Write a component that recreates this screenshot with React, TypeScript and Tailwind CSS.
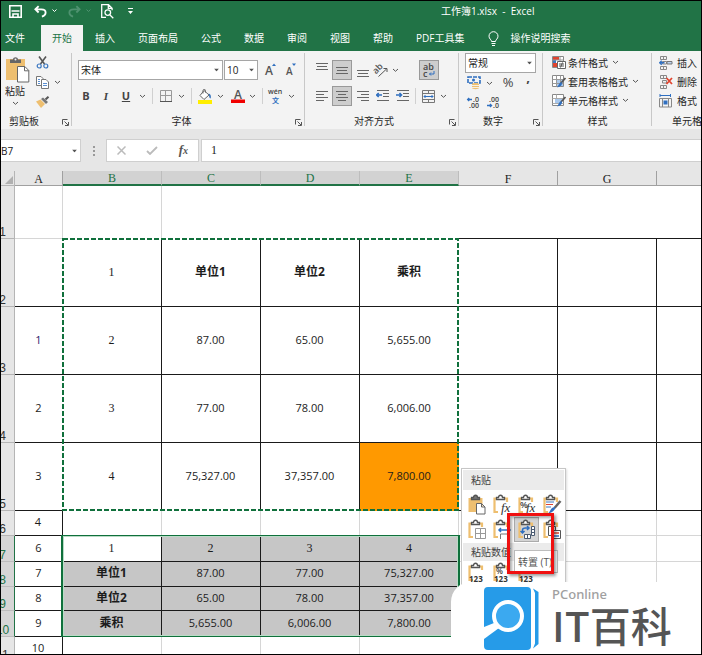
import React from "react";

const K = "border-[#1a1a1a]";
const G = "border-[#d6d6d6]";
const SERIF = "font-['Liberation_Serif','Noto_Sans_CJK_SC',serif]";

/* ---------- small shared pieces ---------- */

function Chevron() {
  return (
    <svg width="7" height="5" viewBox="0 0 7 5" fill="none" stroke="#555" className="shrink-0">
      <path d="M1 1l2.5 2.3L6 1" />
    </svg>
  );
}

function Caret() {
  return (
    <svg width="5" height="3" viewBox="0 0 5 3" fill="#555" className="pointer-events-none absolute right-1 top-1/2 -translate-y-1/2">
      <path d="M0 0h5L2.500 3z" />
    </svg>
  );
}

function Drop({ label }: { label: string }) {
  return (
    <button aria-label={label} className="flex h-5 w-3 items-center justify-center">
      <Chevron />
    </button>
  );
}

function Tool({ label, className = "", children }: { label: string; className?: string; children: React.ReactNode }) {
  return (
    <button aria-label={label} className={`flex h-5 shrink-0 items-center justify-center ${className}`}>
      {children}
    </button>
  );
}

function Rule() {
  return <span className="h-4 w-px shrink-0 bg-[#d0d0d0]" />;
}

function Box({ label, options, className }: { label: string; options: string[]; className: string }) {
  return (
    <div className={`relative shrink-0 ${className}`}>
      <select aria-label={label} className="block h-full w-full appearance-none border border-[#a6a6a6] bg-white pl-[2px] text-[10px] leading-4 text-[#222] outline-none">
        {options.map((o) => (
          <option key={o}>{o}</option>
        ))}
      </select>
      <Caret />
    </div>
  );
}

function Group({
  name,
  launcher,
  labelPad = "",
  className,
  children,
}: {
  name: string;
  launcher?: boolean;
  labelPad?: string;
  className: string;
  children: React.ReactNode;
}) {
  return (
    <section aria-label={name} className={`relative flex shrink-0 flex-col ${className}`}>
      {children}
      <div className="mt-auto flex h-4 items-center">
        <span className={`flex-1 whitespace-nowrap text-center ${labelPad}`}>{name}</span>
        {launcher && (
          <button aria-label={`${name}设置`} className="mr-[3px] mt-[3px]">
            <svg width="7" height="7" viewBox="0 0 7 7" fill="none" stroke="#555">
              <path d="M.5 5.5v-5h5M2.500 2.500l3.500 3.500M6.500 3v3.500H3" />
            </svg>
          </button>
        )}
      </div>
      <span className="absolute bottom-[3px] right-0 top-[2px] w-px bg-[#c8c8c8]" />
    </section>
  );
}

/* ---------- line icons ---------- */

function Lines({ d, h = 8 }: { d: string; h?: number }) {
  return (
    <svg width="12" height={h} viewBox={`0 0 12 ${h}`} fill="none" stroke="#666">
      <path d={d} />
    </svg>
  );
}

function SaveIcon() {
  return (
    <svg width="13" height="13" viewBox="0 0 13 13" fill="none" stroke="#fff" strokeWidth="1.6">
      <path d="M.8.8h11.4v11.4H.8zM2.500 6h8M4 12V9h5v3" />
    </svg>
  );
}

function UndoIcon({ flip }: { flip?: boolean }) {
  return (
    <svg width="13" height="13" viewBox="0 0 14 13" fill="none" stroke={flip ? "#4f9270" : "#fff"} strokeWidth="2" className={flip ? "-scale-x-100" : ""}>
      <path d="M5 .8L1.500 4.200 5 7.600M1.500 4.200h6.300c3 0 4.700 1.500 4.700 3.500 0 2.300-1.700 3.700-4 4.300" />
    </svg>
  );
}

function PreviewIcon() {
  return (
    <svg width="13" height="15" viewBox="0 0 13 15" fill="none" stroke="#fff" strokeWidth="1.3">
      <path d="M5 13.400H.7V.7h6.800l3.600 3.500v2M7.300.9v3.500H11M9 11l3.300 3.200" />
      <circle cx="6.800" cy="8.600" r="2.800" />
    </svg>
  );
}

function PasteBig() {
  return (
    <svg width="25" height="27" viewBox="0 0 25 27">
      <path d="M1 3h19v21H1z" fill="#eebf70" />
      <path d="M5 7V3.400h3C8 .6 13 .6 13 3.400h3V7z" fill="#666" />
      <circle cx="10.500" cy="3.400" r="1" fill="#f3f3f3" />
      <path d="M12.500 10.500h7.300l4 4v11.500h-11.300z" fill="#fff" stroke="#666" />
      <path d="M19.500 10.500v4.300h4.300" fill="none" stroke="#666" />
    </svg>
  );
}

function CutIcon() {
  return (
    <svg width="13" height="13" viewBox="0 0 13 13" fill="none">
      <path d="M3 .5l5.500 7.500M10 .5L4.500 8" stroke="#555" strokeWidth="1.600" />
      <circle cx="3.200" cy="10" r="2" stroke="#3c78c0" strokeWidth="1.200" />
      <circle cx="9.800" cy="10" r="2" stroke="#3c78c0" strokeWidth="1.200" />
    </svg>
  );
}

function CopyIcon() {
  return (
    <svg width="13" height="13" viewBox="0 0 13 13" fill="#fff" stroke="#777">
      <path d="M.5.5h4.500l2 2v7H.5z" />
      <path d="M5.500 3.500h4.500l2.500 2.500v6.500h-7z" />
      <path d="M2 3.500h2M2 5.500h2M2 7.500h2M7 7.500h4M7 9.500h4" stroke="#5b8fd0" />
    </svg>
  );
}

function BrushIcon() {
  return (
    <svg width="14" height="12" viewBox="0 0 14 12">
      <path d="M0 5.500l4.500-2 4.500 4.500-4 4z" fill="#eebf70" />
      <path d="M5 3l2-1.500 5 4.500-2 2z" fill="#777" />
      <path d="M9.500 3.500L12.500.7" stroke="#555" strokeWidth="2" />
    </svg>
  );
}

function BordersIcon() {
  return (
    <svg width="12" height="12" viewBox="0 0 12 12" fill="none" stroke="#999">
      <path d="M.5.500h11v11M.5.500v11M5.500 1v10M1 5.500h10" />
      <path d="M0 11.500h12" stroke="#555" />
    </svg>
  );
}

function FillIcon() {
  return (
    <svg width="14" height="15" viewBox="0 0 14 15" fill="none">
      <path d="M6 1.500l5 4.500-5 4.500L2 6.500z" fill="#fff" stroke="#666" />
      <path d="M5 4.500V1.500c0-1.500 2.500-1.500 2.500 0v2" stroke="#666" />
      <path d="M10.500 4.500c2 .5 2.800 2 2.300 5-1.600-.5-1.800-2-1.800-3.500z" fill="#3c78c0" />
      <path d="M0 11h14v4H0z" fill="#ffee00" />
    </svg>
  );
}

function OrientIcon() {
  return (
    <svg width="14" height="14" viewBox="0 0 14 14" className="overflow-visible">
      <text x="0" y="9" fontSize="9" fontWeight="600" fontFamily="Open Sans" fill="#555" transform="rotate(-45 4 8)">ab</text>
      <path d="M4.500 13.500L12.500 6M9.500 5.500h3.500v3.500" fill="none" stroke="#555" />
    </svg>
  );
}

function IndentIcon({ inward }: { inward?: boolean }) {
  return (
    <svg width="14" height="12" viewBox="0 0 14 12" fill="none">
      <path d="M1 .5h12M7 3.500h6M7 6.500h6M1 10.500h12" stroke="#666" />
      <path d={inward ? "M0 5h5.500M3.500 3l2 2-2 2" : "M6 5H.7M2.700 3l-2 2 2 2"} stroke="#2f6fc0" strokeWidth="1.600" />
    </svg>
  );
}

function MergeIcon() {
  return (
    <svg width="13" height="13" viewBox="0 0 13 13" fill="none">
      <path d="M.5.5h12v12H.5zM.5 3.500h12M.5 9.500h12M6.500.5v3M6.500 9.500v3" stroke="#777" />
      <path d="M2 6.500h9M3.500 5L2 6.500 3.500 8M9.500 5L11 6.500 9.500 8" stroke="#2f6fc0" />
    </svg>
  );
}

function CurrencyIcon() {
  return (
    <svg width="14" height="14" viewBox="0 0 14 14" fill="none">
      <path d="M1 1h12v6H1z" stroke="#2f6fc0" strokeWidth="1.600" strokeDasharray="4 1" />
      <circle cx="6.500" cy="4" r="1.500" fill="#2f6fc0" />
      <path d="M5 8c0-1.500 7-1.500 7 0v4c0 1.500-7 1.500-7 0z" fill="#eebf70" />
      <path d="M5 9.500h7M5 11.500h7" stroke="#f7f0e2" />
    </svg>
  );
}

function DecimalIcon({ less }: { less?: boolean }) {
  return (
    <svg width="14" height="13" viewBox="0 0 14 13" fontFamily="Open Sans" fontSize="7" fontWeight="600" fill="#444" className="overflow-visible">
      <text x={less ? 2 : 6} y="6">{less ? ".00" : ".0"}</text>
      <text x={less ? 6 : 2} y="12">{less ? ".0" : ".00"}</text>
      <path d={less ? "M0 9.500h4.500M3 8l1.500 1.500L3 11" : "M5 3.500H.7M2.200 2L.7 3.500 2.200 5"} fill="none" stroke="#2f6fc0" strokeWidth="1.400" />
    </svg>
  );
}

function StyleIcon({ kind }: { kind: "cond" | "table" | "cell" }) {
  return (
    <svg width="14" height="13" viewBox="0 0 14 13" fill="none">
      <path d="M.5.5h11v11H.5z" fill="#fff" stroke="#888" />
      {kind === "cond" ? (
        <>
          <path d="M1 1h6v3H1zM1 7h4v4H1z" fill="#e0442e" />
          <path d="M1 4h3v3H1z" fill="#3c78c0" />
          <path d="M8 1v4M.5 4h11" stroke="#999" />
          <path d="M5.500 5.500h8v7h-8z" fill="#fff" stroke="#666" />
          <path d="M7 8h5M7 10h5M10.500 6.500l-2 5" stroke="#555" />
        </>
      ) : (
        <>
          {kind === "table" ? (
            <>
              <path d="M4 4h7v7H4z" fill="#a9c8ec" />
              <path d="M.5 4.500h11M.5 8.500h11M4.500.5v11M8.500.5v11" stroke="#999" />
            </>
          ) : (
            <>
              <path d="M3 4h7v5H3z" fill="#a9c8ec" />
              <path d="M.5 4.500h11M4.500.5v4M.5 9.500h11" stroke="#aaa" />
            </>
          )}
          <path d="M13.500 3L9 8" stroke="#555" strokeWidth="1.800" />
          <path d="M9.500 7.200c1.200 1 .5 4.300-4.500 5.300 1.800-1.600 1.500-5 4.500-5.300z" fill="#2f6fc0" />
        </>
      )}
    </svg>
  );
}

function CellsIcon({ kind }: { kind: "ins" | "del" | "fmt" }) {
  return (
    <svg width="14" height="14" viewBox="0 0 14 14" fill="none">
      {kind === "fmt" ? (
        <>
          <path d="M1 0v3M11.500 0v3M1 1.500h10.500" stroke="#2f6fc0" />
          <path d="M.5 4.500h12v8.500H.5zM3.500 4.500V13M9.500 4.500V13" stroke="#888" />
          <path d="M4.500 6.500h4v4h-4z" fill="#2f6fc0" />
        </>
      ) : (
        <>
          <path d="M1.500.5h6v3h-6zM4.500.5v3M1.500 10.500h6v3h-6zM4.500 10.500v3" stroke="#888" />
          <path d="M3.500 5.500h4v2.500h-4z" stroke="#888" />
          {kind === "ins" ? (
            <>
              <path d="M5.500 6.700H.7M2.700 4.700l-2 2 2 2" stroke="#2f6fc0" strokeWidth="1.400" />
              <path d="M8 5.500h5v2.500H8z" fill="#bcd4f0" stroke="#777" />
            </>
          ) : (
            <path d="M7.500 3l5.500 6M13 3L7.500 9" stroke="#e0442e" strokeWidth="1.800" />
          )}
        </>
      )}
    </svg>
  );
}

/* ---------- paste menu icons ---------- */

type PasteKind = "all" | "fx" | "pfx" | "src" | "nob" | "width" | "trans" | "link" | "v" | "pv" | "sv";

function PasteOption({ kind }: { kind: PasteKind }) {
  const values = kind === "v" || kind === "pv" || kind === "sv";
  return (
    <svg width="20" height="22" viewBox="0 0 20 22" fill="none" className="overflow-visible">
      {kind === "all" ? (
        <path d="M1.500 4h14v14h-14z" fill="#eebf70" />
      ) : (
        <path d="M4.500 4.500H2.500V18h3.500M12.500 4.500h2.500V8" stroke="#eebf70" strokeWidth="2.200" />
      )}
      <path d="M4.500 5.500V3.500h2c0-3 4-3 4 0h2v2z" fill={kind === "all" ? "#777" : "#fff"} stroke="#555" strokeWidth="1.300" />
      {kind === "all" && <path d="M9.500 9.500h5l3.500 3.500v7H9.500zM14.500 9.500V13H18" fill="#fff" stroke="#666" />}
      {(kind === "fx" || kind === "pfx") && (
        <text x="9" y="18" fontSize="13" fontStyle="italic" fontFamily="Liberation Serif" fill="#333">fx</text>
      )}
      {kind === "pfx" && <text x="3" y="14" fontSize="9" fontWeight="600" fontFamily="Open Sans" fill="#444">%</text>}
      {kind === "src" && (
        <>
          <path d="M4 8h8M4 13h5" stroke="#3c78c0" />
          <path d="M4 10.500h7" stroke="#e0442e" />
          <path d="M18.500 7l-6 7" stroke="#666" strokeWidth="2.500" />
          <path d="M12.500 13c1.500 1.500 0 5-6.500 6.500 2.500-2 2.500-6 6.500-6.500z" fill="#2f6fc0" />
        </>
      )}
      {kind === "nob" && <path d="M8.500 9.500h10v10h-10zM13.500 9.500v10M8.500 14.500h10" fill="#fff" stroke="#999" />}
      {kind === "width" && (
        <>
          <path d="M8.500 20v-5h9v5" fill="#fff" stroke="#777" />
          <path d="M7 11h11M9 9l-2 2 2 2M16 9l2 2-2 2" stroke="#2f6fc0" strokeWidth="1.500" />
        </>
      )}
      {kind === "trans" && (
        <>
          <path d="M14.500 7.500h3v9h-3zM14.500 10.500h3M14.500 13.500h3M7.500 15.500h6v4h-6zM10.500 15.500v4" fill="#fff" stroke="#4a5a70" />
          <path d="M5.500 14V11c0-1.500 1-2 3-2h3.500M10 7l2 2-2 2M3.500 12l2 2 2-2" stroke="#2f6fc0" strokeWidth="1.500" />
        </>
      )}
      {kind === "link" && (
        <>
          <path d="M6.500 7.500h7v9h-7z" fill="#fff" stroke="#555" />
          <path d="M9.500 11.500h9v8h-9z" fill="#fff" stroke="#555" />
          <path d="M11 14h6" stroke="#e0442e" strokeWidth="1.500" />
          <path d="M11 17h6" stroke="#2f6fc0" strokeWidth="1.500" />
        </>
      )}
      {values && <text x="2" y="20" fontSize="8" fontWeight="bold" fontFamily="Open Sans" fill="#333">123</text>}
      {kind === "pv" && <text x="4" y="12" fontSize="8" fontWeight="600" fontFamily="Open Sans" fill="#444">%</text>}
      {kind === "sv" && <path d="M6 12l4-4 3 4z" fill="#2f6fc0" />}
    </svg>
  );
}

/* ---------- ribbon ---------- */

const TABS = ["开始", "插入", "页面布局", "公式", "数据", "审阅", "视图", "帮助", "PDF工具集"];

function TitleBar() {
  return (
    <header className="bg-[#217346] text-[10px] text-white">
      <div className="flex h-6 items-center">
        <div className="flex w-[440px] shrink-0 items-center pb-1 pl-2">
          <button aria-label="保存"><SaveIcon /></button>
          <button aria-label="撤消" className="ml-3"><UndoIcon /></button>
          <svg width="5" height="4" viewBox="0 0 5 4" fill="none" stroke="#fff" className="ml-[5px]"><path d="M.5.5l2 2 2-2" /></svg>
          <button aria-label="恢复" className="ml-[11px]"><UndoIcon flip /></button>
          <svg width="5" height="4" viewBox="0 0 5 4" fill="none" stroke="#4f9270" className="ml-[5px]"><path d="M.5.5l2 2 2-2" /></svg>
          <button aria-label="打印预览" className="ml-[10px]"><PreviewIcon /></button>
          <button aria-label="自定义快速访问工具栏" className="ml-[14px]">
            <svg width="5" height="6" viewBox="0 0 5 6" fill="#fff"><path d="M0 0h5v1H0zM0 3h5L2.500 6z" /></svg>
          </button>
        </div>
        <h1 className="whitespace-pre pb-1">工作簿1.xlsx  -  Excel</h1>
      </div>
      <nav className="flex h-[26px] items-stretch gap-px whitespace-nowrap">
        <button className="w-[39px] pr-[11px] text-center">文件</button>
        {TABS.map((t, i) => (
          <button key={t} className={i === 0 ? "bg-[#f3f3f3] px-[11px] text-[#217346]" : "px-[11px]"}>
            {t}
          </button>
        ))}
        <button className="ml-3 flex items-center gap-[11px]">
          <svg width="11" height="15" viewBox="0 0 11 15" fill="none" stroke="#fff">
            <path d="M3.500 10.500C3.500 8.500 1 8 1 5.200a4.500 4.500 0 019 0c0 2.800-2.500 3.300-2.500 5.300zM3.500 12.500h4M4 14.500h3" />
          </svg>
          操作说明搜索
        </button>
      </nav>
    </header>
  );
}

function Ribbon() {
  return (
    <div className="flex h-[78px] shrink-0 overflow-hidden bg-[#f3f3f3] text-[10px] leading-4 text-[#262626]">
      <Group name="剪贴板" launcher labelPad="pr-[15px]" className="w-[71px]">
        <div className="flex pl-1 pt-[5px]">
          <button className="flex w-[26px] flex-col items-start">
            <PasteBig />
            <span>粘贴</span>
            <span className="flex w-5 justify-center pt-[2px]"><Chevron /></span>
          </button>
          <div className="flex flex-col gap-[7px] pl-[5px]">
            <button aria-label="剪切"><CutIcon /></button>
            <div className="flex items-center gap-[5px]">
              <button aria-label="复制"><CopyIcon /></button>
              <Chevron />
            </div>
            <button aria-label="格式刷"><BrushIcon /></button>
          </div>
        </div>
      </Group>

      <Group name="字体" launcher labelPad="pr-1" className="w-[233px] pt-[9px]">
        <div className="flex h-5 items-center pl-[6px]">
          <Box label="字体名称" options={["宋体"]} className="h-5 w-[145px]" />
          <Box label="字号" options={["10"]} className="ml-px h-5 w-[34px]" />
          <Tool label="增大字号" className="ml-[7px] w-3">
            <svg width="12" height="14" viewBox="0 0 12 14" fill="#555" className="overflow-visible"><text x="0" y="12" fontSize="12" fontWeight="600" fontFamily="Open Sans">A</text><path d="M7 3h4L9 .5z" fill="#2f6fc0" /></svg>
          </Tool>
          <Tool label="减小字号" className="ml-[9px] w-3">
            <svg width="12" height="14" viewBox="0 0 12 14" fill="#555" className="overflow-visible"><text x="0" y="12" fontSize="10" fontWeight="600" fontFamily="Open Sans">A</text><path d="M6 .5h4L8 3z" fill="#2f6fc0" /></svg>
          </Tool>
        </div>
        <div className="mt-[6px] flex h-5 items-center pl-1 text-[11px] text-[#444]">
          <Tool label="加粗" className="w-5 pb-px font-bold">B</Tool>
          <Tool label="倾斜" className={`w-5 font-bold italic ${SERIF}`}>I</Tool>
          <Tool label="下划线" className="w-5 pb-px font-bold underline">U</Tool>
          <Drop label="下划线样式" />
          <span className="w-1" />
          <Rule />
          <Tool label="边框" className="ml-1 w-[18px]"><BordersIcon /></Tool>
          <Drop label="边框样式" />
          <span className="w-1" />
          <Rule />
          <Tool label="填充颜色" className="ml-1 w-[18px]"><FillIcon /></Tool>
          <Drop label="选择填充颜色" />
          <Tool label="字体颜色" className="ml-1 w-4">
            <svg width="14" height="14" viewBox="0 0 14 14" className="overflow-visible"><text x="3" y="10" fontSize="12" fontWeight="600" fontFamily="Open Sans" fill="#555">A</text><path d="M0 10.500h14V14H0z" fill="#f00000" /></svg>
          </Tool>
          <Drop label="选择字体颜色" />
          <span className="w-1" />
          <Rule />
          <Tool label="拼音" className="ml-1 w-[18px]">
            <svg width="16" height="16" viewBox="0 0 16 16" className="overflow-visible"><text x="0" y="6" fontSize="7" fontWeight="600" fontFamily="Open Sans" fill="#444">wén</text><text x="4" y="15" fontSize="7" fontWeight="bold" fontFamily="Noto Sans CJK SC" fill="#2f6fc0">文</text></svg>
          </Tool>
          <Drop label="拼音选项" />
        </div>
      </Group>

      <Group name="对齐方式" launcher labelPad="pr-[6px]" className="w-[154px] pt-[9px]">
        <div className="flex h-5 items-center pl-[6px]">
          <Tool label="顶端对齐" className="w-[21px]"><Lines d="M0 .5h12M1 3.500h10M0 6.500h12" h={14} /></Tool>
          <Tool label="垂直居中" className="w-5 border border-[#999] bg-[#cdcdcd]"><Lines d="M0 .5h12M1 3.500h10M0 6.500h12" h={7} /></Tool>
          <Tool label="底端对齐" className="w-[21px]"><Lines d="M0 7.500h12M1 10.500h10M0 13.500h12" h={14} /></Tool>
          <Tool label="方向" className="w-4"><OrientIcon /></Tool>
          <Drop label="方向选项" />
          <Tool label="自动换行" className="ml-[18px] w-5 border border-[#999] bg-[#cdcdcd]">
            <svg width="14" height="16" viewBox="0 0 14 16" fontSize="9" fontWeight="600" fontFamily="Open Sans" fill="#444" className="overflow-visible"><text x="1" y="8">ab</text><text x="1" y="15">c</text><path d="M12 9v3H7.500M9 10.500L7.500 12 9 13.500" fill="none" stroke="#2f6fc0" /></svg>
          </Tool>
        </div>
        <div className="mt-[6px] flex h-5 items-center pl-[6px]">
          <Tool label="左对齐" className="w-[21px]"><Lines d="M0 .5h12M0 3.500h8M0 6.500h12M0 9.500h8" h={10} /></Tool>
          <Tool label="居中" className="w-5 border border-[#999] bg-[#cdcdcd]"><Lines d="M0 .5h12M2 3.500h8M0 6.500h12M2 9.500h8" h={10} /></Tool>
          <Tool label="右对齐" className="w-[21px]"><Lines d="M0 .5h12M4 3.500h8M0 6.500h12M4 9.500h8" h={10} /></Tool>
          <Tool label="减少缩进量" className="w-5"><IndentIcon /></Tool>
          <Tool label="增加缩进量" className="w-5"><IndentIcon inward /></Tool>
          <span className="w-[2px]" />
          <Rule />
          <Tool label="合并后居中" className="ml-1 w-[17px]"><MergeIcon /></Tool>
          <Drop label="合并选项" />
        </div>
      </Group>

      <Group name="数字" launcher labelPad="pr-[6px]" className="w-[84px] pt-[2px]">
        <div className="flex h-5 items-center pl-[6px]">
          <Box label="数字格式" options={["常规"]} className="h-5 w-[71px]" />
        </div>
        <div className="flex h-5 items-center pl-[6px] text-[13px] text-[#444]">
          <Tool label="会计数字格式" className="w-[18px]"><CurrencyIcon /></Tool>
          <Drop label="货币" />
          <Tool label="百分比" className="ml-1 w-[18px] pb-[2px]">%</Tool>
          <Tool label="千位分隔" className="ml-1 w-[14px] pt-1 font-bold">’</Tool>
        </div>
        <div className="flex h-5 items-center gap-[6px] pb-[2px] pl-2">
          <Tool label="增加小数位数"><DecimalIcon /></Tool>
          <Tool label="减少小数位数"><DecimalIcon less /></Tool>
        </div>
      </Group>

      <Group name="样式" className="w-[109px] pt-[2px]">
        {([["cond", "条件格式"], ["table", "套用表格格式"], ["cell", "单元格样式"]] as const).map(([k, t]) => (
          <button key={k} className="flex h-[19px] items-center gap-[2px] whitespace-nowrap pl-[9px]">
            <StyleIcon kind={k} />
            <span>{t}</span>
            <span className="pl-[2px]"><Chevron /></span>
          </button>
        ))}
      </Group>

      <Group name="单元格" className="w-[70px] pt-[2px]">
        {([["ins", "插入"], ["del", "删除"], ["fmt", "格式"]] as const).map(([k, t]) => (
          <button key={k} className="flex h-[19px] items-center gap-1 whitespace-nowrap pl-[7px]">
            <CellsIcon kind={k} />
            <span>{t}</span>
          </button>
        ))}
      </Group>
    </div>
  );
}

function FormulaBar() {
  return (
    <div className="flex shrink-0 bg-[#e6e6e6] pb-[9px] pt-[10px]">
      <div className="relative h-[23px] w-20 shrink-0">
        <input aria-label="名称框" defaultValue="B7" className="block h-full w-full border border-l-0 border-[#cfcfcf] bg-white text-[10px] text-[#222] outline-none" />
        <Caret />
      </div>
      <svg width="2" height="10" viewBox="0 0 2 10" fill="#999" className="ml-3 mt-[7px] shrink-0">
        <path d="M0 0h2v2H0zM0 4h2v2H0zM0 8h2v2H0z" />
      </svg>
      <div className="ml-[11px] flex h-[23px] w-[93px] shrink-0 items-center justify-between border border-[#cfcfcf] bg-white px-[10px]">
        <button aria-label="取消"><svg width="9" height="9" viewBox="0 0 9 9" stroke="#bbb" strokeWidth="1.500"><path d="M.5.5l8 8M8.500.5l-8 8" /></svg></button>
        <button aria-label="输入"><svg width="12" height="9" viewBox="0 0 12 9" fill="none" stroke="#bbb" strokeWidth="1.800"><path d="M1 5l3 3 7-7" /></svg></button>
        <button aria-label="插入函数" className="font-['Liberation_Serif',serif] text-[13px] font-bold italic leading-4 text-[#555]">f<span className="text-[10px]">x</span></button>
      </div>
      <input aria-label="编辑栏" defaultValue="1" className={`ml-[2px] h-[23px] min-w-0 flex-1 border border-r-0 border-[#cfcfcf] bg-white pl-[9px] text-[12px] text-[#222] outline-none ${SERIF}`} />
    </div>
  );
}

/* ---------- sheet ---------- */

type Row = { n: number; h: string; a: string; v: string[] };

const SOURCE: Row[] = [
  { n: 2, h: "h-[68px]", a: "", v: ["1", "单位1", "单位2", "乘积"] },
  { n: 3, h: "h-[68px]", a: "1", v: ["2", "87.00", "65.00", "5,655.00"] },
  { n: 4, h: "h-[68px]", a: "2", v: ["3", "77.00", "78.00", "6,006.00"] },
  { n: 5, h: "h-[68px]", a: "3", v: ["4", "75,327.00", "37,357.00", "7,800.00"] },
];

const RESULT: Row[] = [
  { n: 7, h: "h-[26px]", a: "6", v: ["1", "2", "3", "4"] },
  { n: 8, h: "h-[25px]", a: "7", v: ["单位1", "87.00", "77.00", "75,327.00"] },
  { n: 9, h: "h-[24px]", a: "8", v: ["单位2", "65.00", "78.00", "37,357.00"] },
  { n: 10, h: "h-[26px]", a: "9", v: ["乘积", "5,655.00", "6,006.00", "7,800.00"] },
];

function textStyle(v: string) {
  if (/^\d$/.test(v)) return `text-[12px] ${SERIF}`;
  return /^[^\d]/.test(v) ? "text-[12px] font-bold" : "";
}

function RowHead({ n, on }: { n: number; on?: boolean }) {
  return (
    <th scope="row" className={`border-b border-r p-0 align-bottom font-normal ${on ? "border-b-[#bdbdbd] border-r-[#217346] bg-[#d6d6d6] text-[#217346]" : "border-[#b5b5b5] bg-[#e6e6e6] text-[#333]"}`}>
      <div className="flex justify-center overflow-hidden pr-[10px] leading-3">
        <span className="font-['Liberation_Sans',sans-serif] text-[12px]">{n}</span>
      </div>
    </th>
  );
}

const CELL = "p-0 pb-[2px] pr-px text-center align-middle border-solid";

function Sheet() {
  return (
    <div className="relative min-h-0 flex-1 overflow-hidden bg-white">
      <table className="w-full table-fixed border-separate border-spacing-0 text-[11px] leading-4 text-[#1c1c1c]">
        <colgroup>
          <col className="w-[14px]" />
          <col className="w-12" />
          <col className="w-[99px]" />
          <col className="w-[99px]" />
          <col className="w-[99px]" />
          <col className="w-[99px]" />
          <col className="w-[99px]" />
          <col className="w-[99px]" />
          <col />
        </colgroup>
        <thead>
          <tr className={`h-[15px] bg-[#e6e6e6] text-[12px] leading-3 ${SERIF}`}>
            <th className="border-b border-r border-[#b5b5b5] p-0 align-bottom">
              <svg width="8" height="8" viewBox="0 0 8 8" fill="#b0b0b0" className="mb-px ml-auto mr-px"><path d="M8 0v8H0z" /></svg>
            </th>
            {["A", "B", "C", "D", "E", "F", "G", ""].map((c, i) => (
              <th
                key={i}
                scope="col"
                className={
                  i >= 1 && i <= 4
                    ? "border-b-2 border-r border-b-[#217346] border-r-[#bdbdbd] bg-[#d2d2d2] p-0 align-bottom font-normal text-[#217346]"
                    : `border-b border-[#a0a0a0] p-0 align-bottom font-normal ${i === 7 ? "" : "border-r"}`
                }
              >
                {c}
              </th>
            ))}
          </tr>
        </thead>
        <tbody>
          <tr className="h-[53px]">
            <RowHead n={1} />
            <td className={`${CELL} border-b border-r ${G}`} />
            <td className={`${CELL} border-r ${G}`} />
            <td colSpan={3} className={CELL} />
            <td className={`${CELL} border-b ${K}`} />
            <td className={`${CELL} border-b ${K}`} />
            <td className={`${CELL} border-b ${K}`} />
          </tr>
          {SOURCE.map((row, ri) => {
            const last = ri === 3;
            return (
              <tr key={row.n} className={row.h}>
                <RowHead n={row.n} />
                <td className={`${CELL} border-b ${K} ${ri === 1 ? "text-[#2a1a6a]" : ""}`}>{row.a}</td>
                {row.v.map((v, i) => (
                  <td
                    key={i}
                    className={`${CELL} ${last ? "" : "border-b"} ${i < 3 ? "border-r" : ""} ${K} ${textStyle(v)} ${last && i === 3 ? "bg-[#ff9900]" : ""}`}
                  >
                    {v}
                  </td>
                ))}
                <td className={`${CELL} border-b border-r ${K}`} />
                <td className={`${CELL} border-b border-r ${K}`} />
                <td className={`${CELL} border-b ${K}`} />
              </tr>
            );
          })}
          <tr className="h-[25px]">
            <RowHead n={6} />
            <td className={`${CELL} border-b border-r ${K}`}>4</td>
            {[0, 1, 2, 3].map((i) => (
              <td key={i} className={`${CELL} border-r ${G}`} />
            ))}
            <td className={`${CELL} border-b border-r ${G}`} />
            <td className={`${CELL} border-b border-r ${G}`} />
            <td className={`${CELL} border-b ${G}`} />
          </tr>
          {RESULT.map((row, ri) => (
            <tr key={row.n} className={row.h}>
              <RowHead n={row.n} on />
              <td className={`${CELL} border-b ${K}`}>{row.a}</td>
              {row.v.map((v, i) => (
                <td
                  key={i}
                  className={`${CELL} border-b ${i < 3 ? "border-r" : ""} ${K} ${textStyle(v)} ${ri === 0 && i === 0 ? "bg-white" : "bg-[#c6c6c6]"}`}
                >
                  {v}
                </td>
              ))}
              <td className={`${CELL} border-b border-r ${G}`} />
              <td className={`${CELL} border-b border-r ${G}`} />
              <td className={`${CELL} border-b ${G}`} />
            </tr>
          ))}
          <tr className="h-[25px]">
            <RowHead n={11} />
            <td className={`${CELL} border-b border-r ${K}`}>10</td>
            {[0, 1, 2, 3, 4, 5].map((i) => (
              <td key={i} className={`${CELL} border-b border-r ${G}`} />
            ))}
            <td className={`${CELL} border-b ${G}`} />
          </tr>
        </tbody>
      </table>

      {/* copied range */}
      <svg width="399" height="275" className="pointer-events-none absolute left-[59px] top-[66px]" fill="none" stroke="#10703c" strokeWidth="2" strokeDasharray="5 2">
        <rect x="3" y="2" width="395" height="271" />
      </svg>
      {/* selected range */}
      <div className="pointer-events-none absolute left-[60px] top-[364px] h-[102px] w-[399px] border-x-2 border-y border-[#10703c] shadow-[inset_0_0_0_1px_#b9dcc6]" />

      <PasteMenu />
    </div>
  );
}

function PasteMenu() {
  const rows: PasteKind[][] = [
    ["all", "fx", "pfx", "src"],
    ["nob", "width", "trans", "link"],
  ];
  const values: PasteKind[] = ["v", "pv", "sv"];
  return (
    <div className="absolute left-[460px] top-[297px] w-[105px] border border-[#c6c6c6] bg-white text-[10px] leading-5 text-[#444] shadow-[1px_1px_2px_#0002]">
      <div className="m-px mb-[2px] bg-[#ebebeb] pl-2">粘贴</div>
      {rows.map((r, i) => (
        <div key={i} className="flex h-[25px] pl-[2px]">
          {r.map((k) => (
            <button key={k} aria-label={k} className={`flex w-[25px] items-center justify-center ${k === "trans" ? "border border-[#ababab] bg-[#d4d4d4]" : ""}`}>
              <PasteOption kind={k} />
            </button>
          ))}
        </div>
      ))}
      <div className="m-px bg-[#ebebeb] pl-2 leading-[18px]">粘贴数值</div>
      <div className="flex h-[22px] pl-[2px]">
        {values.map((k) => (
          <button key={k} aria-label={k} className="flex w-[25px] items-center justify-center">
            <PasteOption kind={k} />
          </button>
        ))}
      </div>
      <div role="tooltip" className="absolute left-[52px] top-[81px] h-[23px] w-[44px] overflow-hidden whitespace-nowrap border border-[#bdbdbd] bg-white pl-[3px] text-[10px] leading-[22px] text-[#555]">转置 (T)</div>
      <div className="absolute left-[45px] top-[44px] h-[61px] w-[47px] border-[3px] border-[#f01010] shadow-[2px_2px_3px_#0006,inset_2px_2px_3px_#0005]" />
    </div>
  );
}

function Watermark() {
  return (
    <div className="absolute bottom-0 right-0 flex h-[72px] w-[250px] rounded-tl-[20px] bg-white pl-[33px] pt-[5px]">
      <svg width="55" height="63" viewBox="0 0 55 63" className="shrink-0">
        <path d="M4 0h39a4 4 0 014 4v55a4 4 0 01-4 4H4a4 4 0 01-4-4V4a4 4 0 014-4z" fill="#269be8" />
        <path d="M49 1.500l5.500 3.500v52l-5.500 4.500 2-5V6z" fill="#269be8" />
        <circle cx="24" cy="29" r="14" fill="#3ba9f0" stroke="#fff" strokeWidth="4" />
        <path d="M0 40l10-4 5 5-15 11z" fill="#fff" />
      </svg>
      <div className="ml-[13px] flex flex-col whitespace-nowrap font-['Noto_Sans_CJK_SC',sans-serif]">
        <span className="font-['Noto_Sans',sans-serif] text-[13px] font-medium leading-[14px] text-[#a0a0a0]">PConline</span>
        <span className="text-[41px] font-medium leading-[46px] text-[#555]">IT百科</span>
      </div>
    </div>
  );
}

export default function App() {
  return (
    <div className="relative flex h-screen flex-col overflow-hidden border border-black bg-white font-['Open_Sans','Noto_Sans_CJK_SC',sans-serif]">
      <TitleBar />
      <Ribbon />
      <FormulaBar />
      <Sheet />
      <Watermark />
    </div>
  );
}
